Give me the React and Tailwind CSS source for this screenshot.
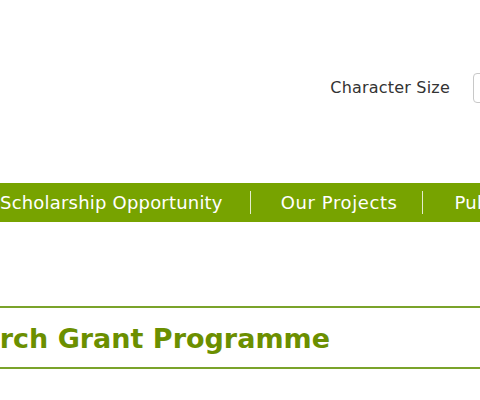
export default function App() {
  return (
    <div className="w-[480px] h-[400px] overflow-hidden bg-white">
      <div className="h-[183px] pt-[73px] flex justify-end items-start font-['DejaVu_Sans',sans-serif]">
        <span className="text-[16px] leading-[30px] text-[#333] tracking-[0.2px]">Character Size</span>
        <div className="ml-[23px] mr-[-60px] w-[67px] h-[30px] shrink-0 border border-[#c8c8c8] rounded-[4px] bg-white"></div>
      </div>
      <nav className="h-[39px] bg-[#77a300] flex items-center text-white text-[18px] whitespace-nowrap font-['DejaVu_Sans',sans-serif] tracking-[0.2px]">
        <span className="shrink-0">Scholarship Opportunity</span>
        <span className="ml-[27px] mr-[30px] w-px h-[23px] bg-white/80 shrink-0"></span>
        <span className="shrink-0 tracking-[0.6px]">Our Projects</span>
        <span className="ml-[24px] mr-[32px] w-px h-[23px] bg-white/80 shrink-0"></span>
        <span className="shrink-0">Publications</span>
      </nav>
      <div className="mt-[84px] border-y-2 border-[#7aa32a] h-[63px] pt-[3px] flex items-center whitespace-nowrap overflow-hidden">
        <h1 className="ml-[-92px] text-[27px] font-bold text-[#6b8f00] font-['DejaVu_Sans',sans-serif]">Research Grant Programme</h1>
      </div>
    </div>
  );
}
